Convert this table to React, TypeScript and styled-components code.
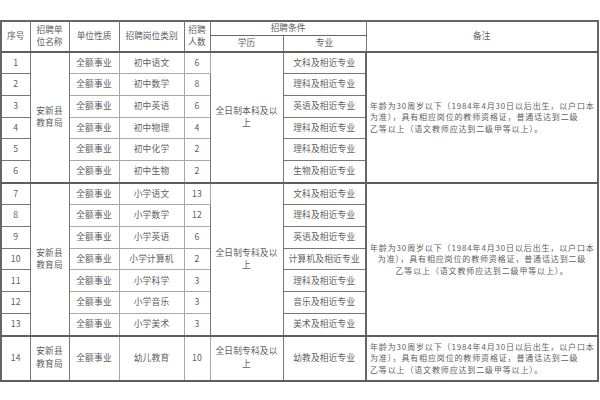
import React from "react";
import styled, { createGlobalStyle } from "styled-components";

const Global = createGlobalStyle`
  html, body { margin: 0; padding: 0; background: #ffffff; }
  body { font-family: "Noto Sans CJK SC", "Noto Sans", sans-serif; }
`;

const Page = styled.div`
  width: 600px;
  height: 400px;
  padding-top: 20px;
  box-sizing: border-box;
  background: #fff;
`;

const Table = styled.table`
  border-collapse: collapse;
  table-layout: fixed;
  width: 597px;
  color: #606060;
  font-size: 8.7px;
  line-height: 12.6px;
  border: 2px solid #666;
`;

const Cell = styled.td<{ $strongBottom?: boolean; $light?: boolean; $h?: number }>`
  border: 1px solid ${(p) => (p.$light ? "#a8a8a8" : "#777")};
  ${(p) => (p.$strongBottom ? "border-bottom: 2px solid #5e5e5e;" : "")}
  text-align: center;
  vertical-align: middle;
  padding: 0 2px;
  white-space: nowrap;
  overflow: hidden;
  letter-spacing: 0.2px;
  ${(p) => (p.$h ? `height: ${p.$h}px;` : "")}
`;

const HeadCell = styled.th<{ $h?: number }>`
  border: 1px solid #777;
  border-bottom: 2px solid #5e5e5e;
  font-weight: 400;
  text-align: center;
  vertical-align: middle;
  padding: 0 2px;
  white-space: nowrap;
  ${(p) => (p.$h ? `height: ${p.$h}px;` : "")}
`;

const TopHeadCell = styled(HeadCell)`
  border-bottom: 1px solid #666;
`;

const RemarkCell = styled.td<{ $center?: boolean; $strongBottom?: boolean }>`
  border: 1px solid #777;
  ${(p) => (p.$strongBottom ? "border-bottom: 2px solid #5e5e5e;" : "")}
  border-left: 2px solid #666;
  text-align: ${(p) => (p.$center ? "center" : "left")};
  vertical-align: middle;
  padding: 0 3px;
  white-space: nowrap;
  font-size: 8px;
  letter-spacing: 0.85px;
  line-height: 11.6px;
`;

const Col = styled.col<{ $w: number }>`
  width: ${(p) => p.$w}px;
`;

type Row = { no: number; job: string; count: number; major: string };

const rows: Row[] = [
  { no: 1, job: "初中语文", count: 6, major: "文科及相近专业" },
  { no: 2, job: "初中数学", count: 8, major: "理科及相近专业" },
  { no: 3, job: "初中英语", count: 6, major: "英语及相近专业" },
  { no: 4, job: "初中物理", count: 4, major: "理科及相近专业" },
  { no: 5, job: "初中化学", count: 2, major: "理科及相近专业" },
  { no: 6, job: "初中生物", count: 2, major: "生物及相近专业" },
  { no: 7, job: "小学语文", count: 13, major: "文科及相近专业" },
  { no: 8, job: "小学数学", count: 12, major: "理科及相近专业" },
  { no: 9, job: "小学英语", count: 6, major: "英语及相近专业" },
  { no: 10, job: "小学计算机", count: 2, major: "计算机及相近专业" },
  { no: 11, job: "小学科学", count: 3, major: "理科及相近专业" },
  { no: 12, job: "小学音乐", count: 3, major: "音乐及相近专业" },
  { no: 13, job: "小学美术", count: 3, major: "美术及相近专业" },
  { no: 14, job: "幼儿教育", count: 10, major: "幼教及相近专业" },
];

type Group = { start: number; span: number; edu: string; center: boolean };

const groups: Group[] = [
  { start: 1, span: 6, edu: "全日制本科及以", center: false },
  { start: 7, span: 7, edu: "全日制专科及以", center: true },
  { start: 14, span: 1, edu: "全日制专科及以", center: false },
];

const Remark = () => (
  <>
    年龄为30周岁以下（1984年4月30日以后出生，以户口本
    <br />
    为准），具有相应岗位的教师资格证，普通话达到二级
    <br />
    乙等以上（语文教师应达到二级甲等以上）。
  </>
);

export default function App() {
  return (
    <Page>
      <Global />
      <Table>
        <colgroup>
          <Col $w={29} />
          <Col $w={39} />
          <Col $w={50} />
          <Col $w={65} />
          <Col $w={26} />
          <Col $w={73} />
          <Col $w={83} />
          <Col $w={232} />
        </colgroup>
        <thead>
          <tr>
            <HeadCell rowSpan={2}>序号</HeadCell>
            <HeadCell rowSpan={2}>
              招聘单
              <br />
              位名称
            </HeadCell>
            <HeadCell rowSpan={2}>单位性质</HeadCell>
            <HeadCell rowSpan={2}>招聘岗位类别</HeadCell>
            <HeadCell rowSpan={2}>
              招聘
              <br />
              人数
            </HeadCell>
            <TopHeadCell colSpan={2} $h={12}>
              招聘条件
            </TopHeadCell>
            <HeadCell rowSpan={2}>备注</HeadCell>
          </tr>
          <tr>
            <HeadCell $h={15}>学历</HeadCell>
            <HeadCell $h={15}>专业</HeadCell>
          </tr>
        </thead>
        <tbody>
          {rows.map((r) => {
            const g = groups.find((x) => x.start === r.no);
            const group = groups.find((x) => r.no >= x.start && r.no < x.start + x.span)!;
            const lastInGroup = r.no === group.start + group.span - 1;
            const h = r.no === 14 ? 43 : 20.7;
            return (
              <tr key={r.no}>
                <Cell $h={h} $strongBottom={lastInGroup}>
                  {r.no}
                </Cell>
                {g && (
                  <Cell rowSpan={g.span} $strongBottom>
                    安新县
                    <br />
                    教育局
                  </Cell>
                )}
                <Cell $light $strongBottom={lastInGroup}>
                  全额事业
                </Cell>
                <Cell $light $strongBottom={lastInGroup}>
                  {r.job}
                </Cell>
                <Cell $light $strongBottom={lastInGroup}>
                  {r.count}
                </Cell>
                {g && (
                  <Cell rowSpan={g.span} $strongBottom>
                    {g.edu}
                    <br />上
                  </Cell>
                )}
                <Cell $strongBottom={lastInGroup}>{r.major}</Cell>
                {g && (
                  <RemarkCell rowSpan={g.span} $center={g.center} $strongBottom>
                    <Remark />
                  </RemarkCell>
                )}
              </tr>
            );
          })}
        </tbody>
      </Table>
    </Page>
  );
}
